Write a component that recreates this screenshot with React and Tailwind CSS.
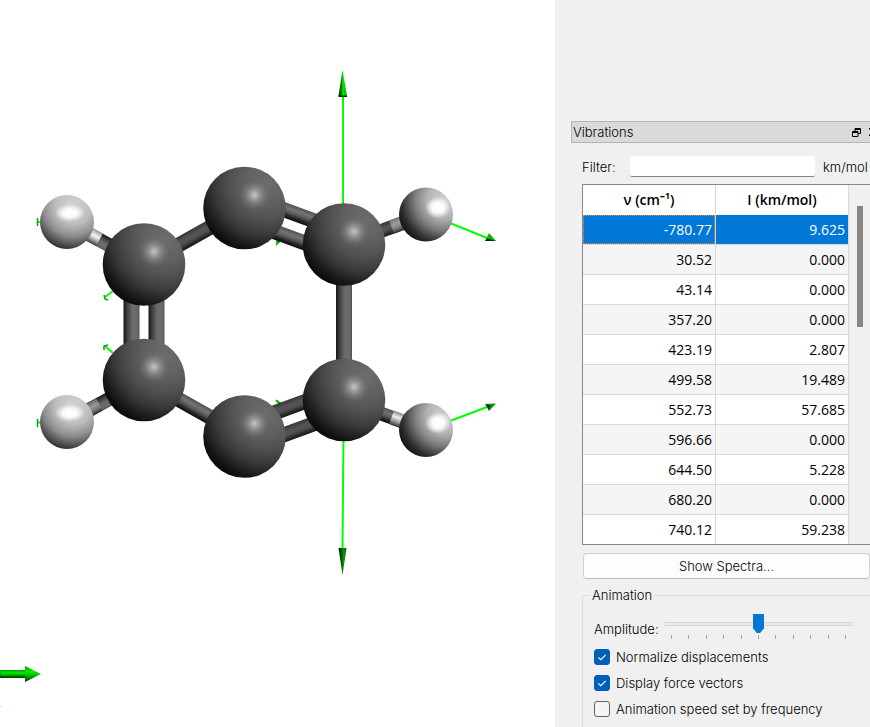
import React, { useState } from "react";

const MODES = [
  ["-780.77", "9.625"],
  ["30.52", "0.000"],
  ["43.14", "0.000"],
  ["357.20", "0.000"],
  ["423.19", "2.807"],
  ["499.58", "19.489"],
  ["552.73", "57.685"],
  ["596.66", "0.000"],
  ["644.50", "5.228"],
  ["680.20", "0.000"],
  ["740.12", "59.238"],
];

const TICKS = [0, 1, 2, 3, 4, 5, 6, 7, 8, 9, 10];

function Bond({ from, to, offset = 0, width = 15, fill, hydrogenFill, split = 0.5 }) {
  const dx = to[0] - from[0];
  const dy = to[1] - from[1];
  const length = Math.hypot(dx, dy);
  const angle = (Math.atan2(dy, dx) * 180) / Math.PI;
  return (
    <g transform={`translate(${from[0]} ${from[1]}) rotate(${angle})`}>
      <rect x="0" y={offset - width / 2} width={length} height={width} fill={`url(#${fill})`} />
      {hydrogenFill && (
        <rect
          x={length * split}
          y={offset - width / 2}
          width={length * (1 - split)}
          height={width}
          fill={`url(#${hydrogenFill})`}
        />
      )}
    </g>
  );
}

function Carbon({ x, y }) {
  return (
    <g transform={`translate(${x} ${y})`}>
      <circle r="41.3" fill="url(#carbon)" />
      <circle cx="10" cy="-13" r="17" fill="url(#carbonShine)" />
    </g>
  );
}

function Hydrogen({ x, y, shine }) {
  return (
    <g transform={`translate(${x} ${y})`}>
      <circle r="27" fill={shine === "top" ? "url(#hydrogenTop)" : "url(#hydrogenSide)"} />
      {shine === "top" ? (
        <ellipse cx="3" cy="-9" rx="15" ry="9" fill="url(#hydrogenShine)" />
      ) : (
        <ellipse cx="12" cy="-7" rx="13" ry="11" fill="url(#hydrogenShine)" />
      )}
    </g>
  );
}

function Stops({ colors }) {
  return colors.map(([offset, color]) => <stop key={offset} offset={offset} stopColor={color} />);
}

const C1 = [244.5, 208];
const C2 = [344, 244.5];
const C3 = [344, 400];
const C4 = [244.5, 436.5];
const C5 = [144, 380];
const C6 = [144, 264.5];
const H1 = [67, 222];
const H2 = [426, 214.5];
const H3 = [426, 430];
const H4 = [67, 422];

function Molecule() {
  return (
    <svg width="555" height="727" viewBox="0 0 555 727" role="img" aria-label="Molecule with force vectors">
      <defs>
        <radialGradient id="carbon" cx="0.76" cy="0.2" r="0.9">
          <Stops
            colors={[
              [0, "#6c6c6c"],
              [0.3, "#606060"],
              [0.5, "#505050"],
              [0.7, "#383838"],
              [0.86, "#1c1c1c"],
              [0.95, "#0e0e0e"],
              [1, "#0c0c0c"],
            ]}
          />
        </radialGradient>
        <radialGradient id="carbonShine">
          <stop offset="0" stopColor="#d4d4d4" stopOpacity="0.9" />
          <stop offset="0.3" stopColor="#b0b0b0" stopOpacity="0.65" />
          <stop offset="0.65" stopColor="#808080" stopOpacity="0.4" />
          <stop offset="1" stopColor="#606060" stopOpacity="0" />
        </radialGradient>
        <radialGradient id="hydrogenTop" cx="0.62" cy="0.2" r="0.86">
          <Stops colors={[[0, "#d4d4d4"], [0.4, "#bcbcbc"], [0.65, "#8e8e8e"], [0.85, "#505050"], [1, "#222222"]]} />
        </radialGradient>
        <radialGradient id="hydrogenSide" cx="0.84" cy="0.24" r="0.92">
          <Stops colors={[[0, "#d0d0d0"], [0.35, "#b4b4b4"], [0.6, "#7c7c7c"], [0.85, "#303030"], [1, "#141414"]]} />
        </radialGradient>
        <radialGradient id="hydrogenShine">
          <stop offset="0" stopColor="#fff" />
          <stop offset="0.45" stopColor="#fff" stopOpacity="0.95" />
          <stop offset="1" stopColor="#fff" stopOpacity="0" />
        </radialGradient>
        <linearGradient id="upright" x1="0" y1="1" x2="0" y2="0">
          <Stops colors={[[0, "#161616"], [0.2, "#3a3a3a"], [0.55, "#6b6b6b"], [0.85, "#6a6a6a"], [1, "#525252"]]} />
        </linearGradient>
        <linearGradient id="falling" x1="0" y1="0" x2="0" y2="1">
          <Stops colors={[[0, "#505050"], [0.3, "#747474"], [0.55, "#5a5a5a"], [0.8, "#242424"], [1, "#0c0c0c"]]} />
        </linearGradient>
        <linearGradient id="rising" x1="0" y1="0" x2="0" y2="1">
          <Stops colors={[[0, "#363636"], [0.35, "#545454"], [0.6, "#505050"], [0.85, "#282828"], [1, "#141414"]]} />
        </linearGradient>
        <linearGradient id="paleRight" x1="0" y1="0" x2="0" y2="1">
          <Stops colors={[[0, "#787878"], [0.4, "#9c9c9c"], [0.7, "#7c7c7c"], [1, "#303030"]]} />
        </linearGradient>
        <linearGradient id="brightRight" x1="0" y1="0" x2="0" y2="1">
          <Stops colors={[[0, "#8a8a8a"], [0.35, "#f0f0f0"], [0.65, "#a0a0a0"], [1, "#333333"]]} />
        </linearGradient>
        <linearGradient id="brightLeft" x1="0" y1="1" x2="0" y2="0">
          <Stops colors={[[0, "#a0a0a0"], [0.4, "#f4f4f4"], [0.65, "#b4b4b4"], [1, "#3c3c3c"]]} />
        </linearGradient>
        <linearGradient id="paleLeft" x1="0" y1="1" x2="0" y2="0">
          <Stops colors={[[0, "#606060"], [0.4, "#999999"], [0.7, "#777777"], [1, "#2b2b2b"]]} />
        </linearGradient>
        <linearGradient id="axis" x1="0" y1="0" x2="0" y2="1">
          <Stops colors={[[0, "#009900"], [0.35, "#00ee00"], [0.6, "#00b800"], [1, "#002a00"]]} />
        </linearGradient>
        <linearGradient id="cone" x1="0" y1="0" x2="1" y2="0">
          <Stops colors={[[0, "#002200"], [0.4, "#009800"], [0.55, "#00f000"], [1, "#00a000"]]} />
        </linearGradient>
        <linearGradient id="coneDark" x1="0" y1="0" x2="1" y2="0">
          <Stops colors={[[0, "#001800"], [0.4, "#006000"], [0.65, "#00a000"], [1, "#005000"]]} />
        </linearGradient>
      </defs>

      <g stroke="#00ff00" strokeWidth="2" fill="none">
        <path d="M343 95V210M343.500 435L342.500 550M450 223L487 238M450 421L487 407" />
        <path d="M37 222H44M37 422.500H44M105 297L113 291M105 346L113 353" />
        <path d="M276 243L282 239M276 401L282 405" />
      </g>
      <g stroke="#0aa00a" strokeWidth="1.500" fill="none">
        <path d="M37.500 218V226M37.500 419V427M104 295L105 299L108 300M104 350L104 346L108 345" />
        <path d="M276 245L279 242L276 241M276 400L280 403L277 405" />
      </g>
      <path d="M342.500 70L347 96H338.500Z" fill="url(#cone)" />
      <path d="M338.500 95.500H347V97H338.500Z" fill="#063006" />
      <path d="M342.500 575L346.500 548H338.500Z" fill="url(#coneDark)" />
      <path d="M496 241L485 241L489 233Z" fill="#00b400" />
      <path d="M485 241L487 238.500L496 241Z" fill="#022a02" />
      <path d="M485 404L496 403.500L489 411Z" fill="#009400" />
      <path d="M486 404.500L490 405L489 410Z" fill="#022a02" />

      <Bond from={C6} to={H1} fill="upright" hydrogenFill="brightLeft" split={0.58} width={14} />
      <Bond from={C5} to={H4} fill="upright" hydrogenFill="paleLeft" split={0.58} width={14} />
      <Bond from={C2} to={H2} fill="rising" hydrogenFill="paleRight" split={0.58} width={14} />
      <Bond from={C3} to={H3} fill="falling" hydrogenFill="brightRight" split={0.58} width={14} />
      <Bond from={C6} to={C1} fill="rising" />
      <Bond from={C5} to={C4} fill="falling" />
      <Bond from={C2} to={C3} fill="upright" width={16} />
      <Bond from={C6} to={C5} fill="upright" width={16} offset={12.5} />
      <Bond from={C6} to={C5} fill="upright" width={16} offset={-12.5} />
      <Bond from={C1} to={C2} fill="falling" offset={12} />
      <Bond from={C1} to={C2} fill="falling" offset={-12} />
      <Bond from={C4} to={C3} fill="rising" offset={12} />
      <Bond from={C4} to={C3} fill="rising" offset={-12} />

      <Carbon x={C1[0]} y={C1[1]} />
      <Carbon x={C2[0]} y={C2[1]} />
      <Carbon x={C4[0]} y={C4[1]} />
      <Carbon x={C3[0]} y={C3[1]} />
      <Carbon x={C6[0]} y={C6[1]} />
      <Carbon x={C5[0]} y={C5[1]} />
      <Hydrogen x={H1[0]} y={H1[1]} shine="top" />
      <Hydrogen x={H4[0]} y={H4[1]} shine="top" />
      <Hydrogen x={H2[0]} y={H2[1]} shine="side" />
      <Hydrogen x={H3[0]} y={H3[1]} shine="side" />

      <rect x="0" y="670" width="26" height="8" fill="url(#axis)" />
      <path d="M25 666L41 674L25 682Z" fill="url(#axis)" />
      <rect x="0" y="706" width="1" height="1" fill="#ffb0b0" />
      <rect x="0" y="672" width="1" height="3" fill="#008c8c" />
    </svg>
  );
}

function CheckOption({ label, defaultChecked }) {
  return (
    <label className="flex h-[26px] items-center gap-1.5">
      <span className="grid size-4 shrink-0">
        <input
          type="checkbox"
          defaultChecked={defaultChecked}
          className="peer col-start-1 row-start-1 size-4 appearance-none rounded-[3px] border border-[#626262] bg-[#f5f5f5] checked:border-[#005fb8] checked:bg-[#005fb8]"
        />
        <svg
          viewBox="0 0 16 16"
          className="pointer-events-none invisible col-start-1 row-start-1 size-4 peer-checked:visible"
          fill="none"
          stroke="#fff"
          strokeWidth="1.1"
          aria-hidden="true"
        >
          <path d="M4.300 8.300L6.800 10.700L11.700 5.800" />
        </svg>
      </span>
      <span className="whitespace-nowrap">{label}</span>
    </label>
  );
}

function ModeTable() {
  const [selected, setSelected] = useState(0);
  return (
    <div className="mt-[7px] flex h-[361px] overflow-hidden border border-[#828790]">
      <table className="w-[266px] shrink-0 table-fixed border-separate border-spacing-0 bg-white font-['Open_Sans',sans-serif] text-sm font-normal">
        <thead>
          <tr className="h-[30px]">
            <th className="border-r border-[#d8d8d8] p-0 leading-5 font-semibold">ν (cm⁻¹)</th>
            <th className="border-r border-[#d8d8d8] p-0 leading-5 font-semibold">I (km/mol)</th>
          </tr>
        </thead>
        <tbody>
          {MODES.map(([frequency, intensity], i) => {
            const on = i === selected;
            const row = on ? "bg-[#0078d7] text-white" : i % 2 ? "bg-[#f5f5f5]" : "bg-white";
            return (
              <tr key={frequency} className={`h-[30px] ${row}`} onClick={() => setSelected(i)}>
                <td className="border-r border-b border-[#d8d8d8] p-0 text-right leading-5">
                  <div
                    className={
                      on
                        ? "flex h-[29px] items-center justify-end border border-dotted border-[#ff8728] pr-0.5"
                        : "pr-[3px]"
                    }
                  >
                    {frequency}
                  </div>
                </td>
                <td className="border-r border-b border-[#d8d8d8] p-0 pr-[3px] text-right leading-5">{intensity}</td>
              </tr>
            );
          })}
        </tbody>
      </table>
      <div className="flex-1 bg-[#f0f0f0] pt-[21px] pl-2">
        <div className="h-[121px] w-1.5 bg-[#858585]" />
      </div>
    </div>
  );
}

function VibrationsDock() {
  return (
    <section className="w-[300px]">
      <header className="flex h-[22px] items-center border border-[#b5b5b5] bg-[#dadada] pl-px">
        <h2 className="w-[279px] shrink-0">Vibrations</h2>
        <button type="button" aria-label="Float" className="size-[9px] shrink-0">
          <svg viewBox="0 0 9 9" className="block size-[9px]" fill="none" stroke="#000" aria-hidden="true">
            <path d="M3 3V0.500H8.500V5.500H6M3 1.500H8.500M0.500 3.500H6V8.500H0.500ZM0.500 4.500H6" />
          </svg>
        </button>
        <button type="button" aria-label="Close" className="ml-2 size-2 shrink-0">
          <svg viewBox="0 0 8 8" className="block size-2" fill="none" stroke="#000" strokeWidth="1.500" aria-hidden="true">
            <path d="M0 0L8 8M8 0L0 8" />
          </svg>
        </button>
      </header>
      <div className="pt-[13px] pl-[11px]">
        <div className="flex h-[21px] items-center">
          <label htmlFor="filter" className="w-12 shrink-0">
            Filter:
          </label>
          <input
            id="filter"
            type="text"
            className="h-[21px] w-[185px] shrink-0 rounded-xs border-b border-[#868686] bg-white px-1 outline-none"
          />
          <span className="pl-2">km/mol</span>
        </div>
        <ModeTable />
        <button
          type="button"
          className="mt-2 ml-px block h-[26px] w-[287px] rounded border border-[#d0d0d0] border-b-[#bbb] bg-[#fdfdfd]"
        >
          Show Spectra...
        </button>
        <fieldset className="mt-2 h-[150px] border border-[#dcdcdc] pl-[11px]">
          <legend className="-ml-1 px-0.5 leading-4">Animation</legend>
          <div className="mt-[11px] flex items-start">
            <label htmlFor="amplitude" className="w-[71px] shrink-0 pt-[7px] leading-4">
              Amplitude:
            </label>
            <div className="w-[187px] shrink-0">
              <input
                id="amplitude"
                type="range"
                min="0"
                max="100"
                defaultValue="50"
                className="block h-5 w-full appearance-none bg-transparent [&::-webkit-slider-runnable-track]:h-1 [&::-webkit-slider-runnable-track]:border [&::-webkit-slider-runnable-track]:border-[#d6d6d6] [&::-webkit-slider-runnable-track]:bg-[#e7eaea] [&::-webkit-slider-thumb]:-mt-[9px] [&::-webkit-slider-thumb]:h-[19px] [&::-webkit-slider-thumb]:w-[11px] [&::-webkit-slider-thumb]:appearance-none [&::-webkit-slider-thumb]:bg-[#0078d7] [&::-webkit-slider-thumb]:[clip-path:polygon(0_0,100%_0,100%_75%,65%_100%,35%_100%,0_75%)]"
              />
              <div className="mt-px flex justify-between px-1.5">
                {TICKS.map((t) => (
                  <span key={t} className="h-1 w-px bg-[#a3a399]" />
                ))}
              </div>
            </div>
          </div>
          <div className="mt-[5px]">
            <CheckOption label="Normalize displacements" defaultChecked />
            <CheckOption label="Display force vectors" defaultChecked />
            <CheckOption label="Animation speed set by frequency" />
          </div>
        </fieldset>
      </div>
    </section>
  );
}

export default function App() {
  return (
    <div className="flex h-screen overflow-hidden bg-white font-['Inter',sans-serif] text-[13px] leading-5 font-light text-black">
      <main className="min-w-0 flex-1 overflow-hidden">
        <Molecule />
      </main>
      <aside className="w-[315px] shrink-0 overflow-hidden bg-[#f0f0f0] pt-[121px] pl-4">
        <VibrationsDock />
      </aside>
    </div>
  );
}
